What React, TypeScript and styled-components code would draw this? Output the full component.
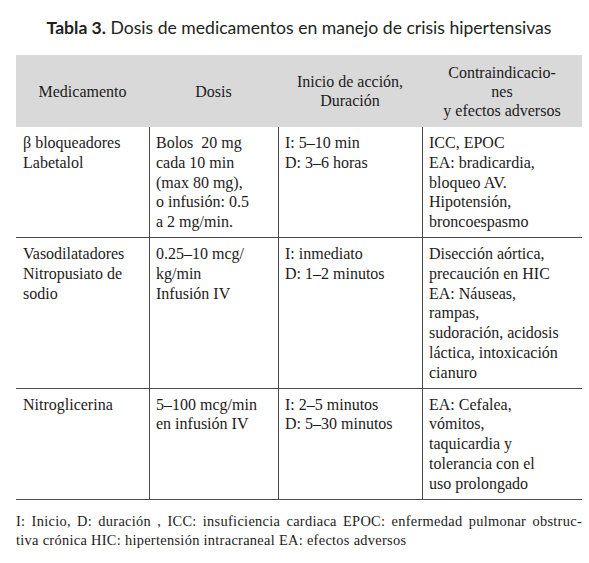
import React from 'react'
import styled, { createGlobalStyle } from 'styled-components'

const GlobalStyle = createGlobalStyle`
  html, body { margin: 0; padding: 0; background: #fff; }
  body { width: 589px; height: 563px; overflow: hidden; }
`

const Page = styled.div`
  padding: 17px 7px 0 16px;
  color: #1d1a1b;
  font-family: "Liberation Serif", "Times New Roman", serif;
`

const Title = styled.h1`
  margin: 0 0 16px;
  text-align: center;
  font-family: Lato, "Open Sans", sans-serif;
  font-size: 17.6px;
  line-height: 22px;
  font-weight: 400;
  color: #231f20;
  b { font-weight: 700; }
`

const COLS = '133px 129px 144px 160px'

const HeadRow = styled.div`
  display: grid;
  grid-template-columns: ${COLS};
  background: #d9d9da;
  height: 72px;
`

const HeadCell = styled.div`
  display: flex;
  align-items: center;
  justify-content: center;
  text-align: center;
  font-size: 16px;
  line-height: 19px;
  padding: 0 4px;
`

const Row = styled.div`
  display: grid;
  grid-template-columns: ${COLS};
  border-bottom: 1.5px solid #4a4a4a;
`

const Cell = styled.div<{ $first?: boolean }>`
  padding: 6px 4px 5px ${p => (p.$first ? '7px' : '6px')};
  border-left: ${p => (p.$first ? 'none' : '1.5px solid #4a4a4a')};
  font-size: 16px;
  line-height: 19.8px;
  white-space: pre;
`

const Notes = styled.div`
  margin-top: 12px;
  width: 566px;
  font-size: 14.4px;
  line-height: 19px;
  letter-spacing: 0.3px;
`

const NoteLine = styled.div<{ $justify?: boolean }>`
  text-align: ${p => (p.$justify ? 'justify' : 'left')};
  text-align-last: ${p => (p.$justify ? 'justify' : 'left')};
  white-space: nowrap;
`

const rows: string[][][] = [
  [
    ['β bloqueadores', 'Labetalol'],
    ['Bolos  20 mg', 'cada 10 min', '(max 80 mg),', 'o infusión: 0.5', 'a 2 mg/min.'],
    ['I: 5–10 min', 'D: 3–6 horas'],
    ['ICC, EPOC', 'EA: bradicardia,', 'bloqueo AV.', 'Hipotensión,', 'broncoespasmo'],
  ],
  [
    ['Vasodilatadores', 'Nitropusiato de', 'sodio'],
    ['0.25–10 mcg/', 'kg/min', 'Infusión IV'],
    ['I: inmediato', 'D: 1–2 minutos'],
    ['Disección aórtica,', 'precaución en HIC', 'EA: Náuseas,', 'rampas,', 'sudoración, acidosis', 'láctica, intoxicación', 'cianuro'],
  ],
  [
    ['Nitroglicerina'],
    ['5–100 mcg/min', 'en infusión IV'],
    ['I: 2–5 minutos', 'D: 5–30 minutos'],
    ['EA: Cefalea,', 'vómitos,', 'taquicardia y', 'tolerancia con el', 'uso prolongado'],
  ],
]

const lines = (ls: string[]) =>
  ls.map((l, i) => (
    <React.Fragment key={i}>
      {i > 0 && <br />}
      {l}
    </React.Fragment>
  ))

export default function App() {
  return (
    <>
      <GlobalStyle />
      <Page>
        <Title>
          <b>Tabla 3.</b> Dosis de medicamentos en manejo de crisis hipertensivas
        </Title>
        <HeadRow>
          <HeadCell>Medicamento</HeadCell>
          <HeadCell>Dosis</HeadCell>
          <HeadCell>{lines(['Inicio de acción,', 'Duración'])}</HeadCell>
          <HeadCell>{lines(['Contraindicacio-', 'nes', 'y efectos adversos'])}</HeadCell>
        </HeadRow>
        {rows.map((r, i) => (
          <Row key={i}>
            {r.map((c, j) => (
              <Cell key={j} $first={j === 0}>
                {lines(c)}
              </Cell>
            ))}
          </Row>
        ))}
        <Notes>
          <NoteLine $justify>
            I: Inicio, D: duración , ICC: insuficiencia cardiaca EPOC: enfermedad pulmonar obstruc-
          </NoteLine>
          <NoteLine>tiva crónica HIC: hipertensión intracraneal EA: efectos adversos</NoteLine>
        </Notes>
      </Page>
    </>
  )
}
